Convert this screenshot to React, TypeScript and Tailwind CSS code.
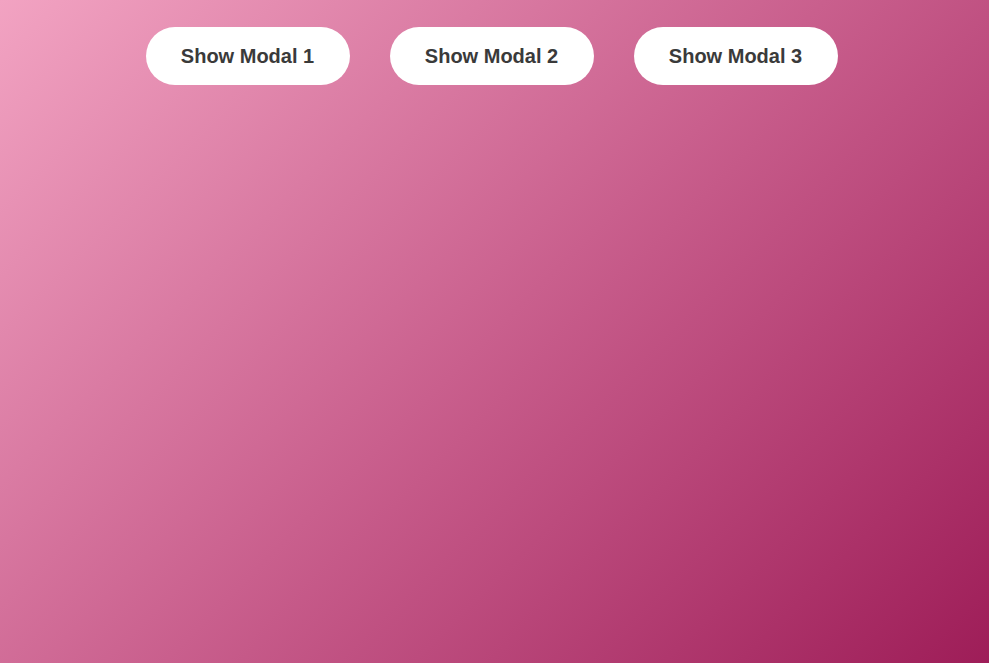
import React from "react";

const buttons = ["Show Modal 1", "Show Modal 2", "Show Modal 3"];

export default function App() {
  return (
    <div className="min-h-[663px] w-full bg-[linear-gradient(135deg,#f2a3c2_0%,#c95f8d_50%,#9e1d58_100%)] font-['Liberation_Sans',Arial,sans-serif]">
      <div className="flex justify-center gap-10 pt-[27px] pr-[6px]">
        {buttons.map((label) => (
          <button
            key={label}
            className="h-[58px] w-[204px] rounded-full bg-white text-[20px] font-bold text-[#3a3a3a]"
          >
            {label}
          </button>
        ))}
      </div>
    </div>
  );
}
